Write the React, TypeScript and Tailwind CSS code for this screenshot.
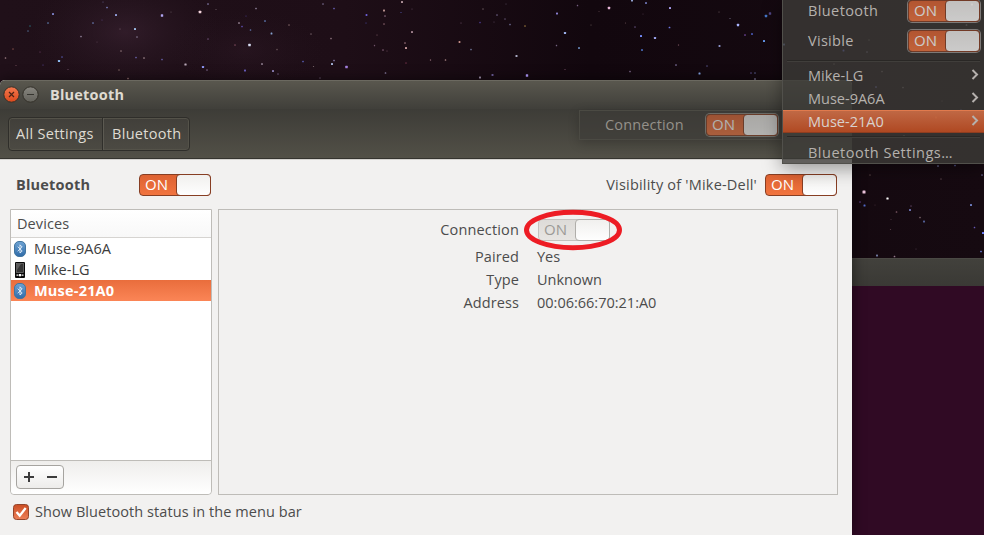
import React from "react";

const STARS: [number, number, number, string][] = [
  [103, 2, 1, "#6f6aa0"], [107, 7.5, 1.5, "#7f86c4"], [116, 15, 2, "#93a0dd"], [53, 14, 2, "#7a7fc4"], [48, 23, 1.5, "#5f7fae"],
  [30, 26, 1.5, "#285a66"], [28, 31, 1.5, "#4a5f80"], [93, 23, 1.5, "#6d80b8"], [102, 20, 1, "#5b4a8a"], [162, 15.5, 2.4, "#b0a4f0"],
  [171, 12, 1, "#6f606a"], [200, 12, 2.6, "#f4d4dc"], [208, 4, 1.5, "#8a82b0"], [135, 29, 2, "#9fbfe8"], [137, 37, 1.5, "#82758e"],
  [120, 29, 1.2, "#735b68"], [81, 36.5, 1.5, "#94849b"], [97, 42, 1, "#604858"], [121, 51, 1.5, "#876d71"], [40, 52, 1.2, "#6a3c64"],
  [13, 49, 1.4, "#7c4a46"], [5.5, 58, 1.5, "#92767c"], [59, 61, 2.2, "#8fbcf2"], [62, 57, 1.5, "#5154a2"], [43, 65, 1.2, "#554390"],
  [16, 65.5, 1.2, "#6b4654"], [68, 69.5, 1.2, "#694c60"], [136, 57.5, 1.5, "#6b64ae"], [144, 58, 1.6, "#988086"], [162, 59.5, 1.5, "#6962b0"],
  [119, 70, 1.5, "#735a58"], [128, 78.5, 1.5, "#9a7575"], [185.5, 64.5, 2.2, "#b9a8b8"], [203, 67, 2.2, "#8c94f0"], [207, 70, 1.5, "#756284"],
  [208, 39, 1.3, "#775781"], [216, 9.5, 1.2, "#67545c"], [256, 8.5, 1.6, "#8c7d95"], [246, 16, 1, "#5145a0"], [239, 23, 1.6, "#ab99a8"],
  [242, 26.5, 1.7, "#5848a0"], [250.5, 30, 1.5, "#5b6ca2"], [265, 21, 1.6, "#6484c2"], [271.5, 33.5, 1.8, "#86a2cf"], [249.5, 45, 2.5, "#d9dff5"],
  [235, 45, 1.3, "#875263"], [277, 49.5, 1.3, "#705d61"], [289, 25, 1.6, "#72595b"], [311, 34, 1.3, "#756269"], [331, 38.5, 1.5, "#8f7680"],
  [323, 4, 1.5, "#776b8e"], [334, 8.5, 1.6, "#655caf"], [366.5, 15, 1.8, "#685cd0"], [384, 10.5, 2, "#b78f8c"], [385, 16, 1.5, "#87657c"],
  [384, 24, 1.4, "#8b656f"], [366, 23, 1.2, "#47449b"], [377, 35, 1.2, "#785560"], [374.5, 45.5, 1.3, "#70546a"], [383, 50, 1.4, "#85637b"],
  [387, 51, 1.2, "#634353"], [303, 61.5, 1.5, "#5d62bd"], [334, 60.5, 1.6, "#8276a3"], [332, 64, 2, "#a7b6dc"], [346.5, 67, 2.5, "#a581e0"],
  [313.5, 66.5, 1.2, "#78676c"], [385.5, 73, 1.6, "#807699"], [262, 64, 1.7, "#aa99ab"], [245, 70.5, 1.8, "#7267d0"], [273, 71, 2, "#8e82b8"],
  [278, 74, 1.3, "#776188"], [320, 78, 1.3, "#645169"],
  [402, 2, 1.8, "#c5a6ad"], [412, 9, 1, "#645064"], [401, 12.5, 1.2, "#4b4c9b"], [412, 32, 2, "#a0818d"], [405, 43, 1.5, "#9a737d"],
  [406, 48, 2, "#c89b9c"], [406, 63, 1.3, "#72324a"], [430.5, 60, 1.3, "#805f6a"], [445.5, 60, 1.5, "#9d7c7c"], [459.5, 42, 1.8, "#c48d85"],
  [471, 49.5, 1.5, "#70789c"], [461, 23, 1.2, "#644a5f"], [480, 22.5, 1.3, "#5643a9"], [483, 9, 1.3, "#6a595e"], [497, 15, 1.4, "#73668d"],
  [506, 4, 1.2, "#4d4053"], [505, 19, 1.3, "#665676"], [510, 24.5, 1.6, "#68668b"], [525, 26, 1.5, "#92733c"], [494, 22, 1, "#605063"],
  [557, 13.5, 1.8, "#978ce6"], [565, 33, 2.2, "#9eb4ef"], [516.5, 56, 2, "#abacc4"], [492.5, 75, 2, "#6b5d9a"], [480, 77.5, 2, "#9f91ab"],
  [527, 75.5, 2.4, "#b29bff"], [556.5, 45.5, 1.4, "#756482"], [579, 48, 1.8, "#6685b5"], [565, 69.5, 1.2, "#6f4b60"], [591, 25, 1.2, "#5c504f"],
  [609, 8, 2.4, "#e8b6d8"], [577.5, 5.5, 1.4, "#775f81"], [599, 11.5, 1, "#5b424c"], [632, .5, 2, "#92a2d0"], [646, 3, 1.8, "#6f76b8"],
  [670, 8, 2, "#aa9ff1"], [669.5, 27.5, 1.7, "#6c74df"], [641, 36, 2, "#758dff"], [655, 38, 2.2, "#9ca4ef"], [642, 50, 1.8, "#4768b4"],
  [635, 27, 1.4, "#63507b"], [625.5, 23, 1.2, "#5d464b"], [643, 14, 1, "#4f3c4e"], [678.5, 45, 1.3, "#63434d"], [719.5, 46, 1.9, "#8b92c7"],
  [738, 25, 2.3, "#aab5ff"], [745, 35, 1.6, "#7349a1"], [752, 34, 1.8, "#4755ae"], [764, 41, 2, "#669bf0"], [766, 16, 2.4, "#4475c7"],
  [770, 13.5, 2.4, "#504586"], [730, 18.5, 1.2, "#666078"], [719, 12, 1.2, "#655459"], [676, 65, 1.6, "#7b709a"], [707, 66, 1.5, "#4c4875"],
  [699.5, 73.5, 2, "#82a4e4"], [630, 71.5, 1.5, "#7f6c8e"], [751, 73, 1.5, "#51477e"], [755, 79, 1.6, "#9087ae"], [755, 73, 1.5, "#545784"],
  [784, 44.5, 2, "#7a8ccb"], [843.5, 50.5, 1.8, "#7b7eff"], [867, 52, 1.5, "#8d7fa9"], [869, 40, 1.3, "#726a6a"], [834, 64, 1.3, "#7a696d"],
  [966.5, 25, 1.7, "#a99ba4"], [972, 4.5, 2, "#ffd9ee"], [876, 87, 1.7, "#857eda"], [903, 87.5, 1.4, "#a09095"], [882, 71.5, 1.4, "#9b858d"],
  [942, 101, 1.2, "#765f60"], [961, 110, 1.3, "#6d7cc2"], [936, 117.5, 2, "#ffe4ac"], [960, 131, 1.8, "#ff92c7"], [904, 136, 1.5, "#9a9170"],
  [864, 192, 3, "#eec5dd"], [887.5, 198.5, 2.2, "#ffffff"], [864.5, 205.5, 2, "#5068c5"], [860, 202, 1.7, "#533577"], [896.5, 212, 1.6, "#75535f"],
  [910, 210, 2, "#6c72af"], [911, 206, 1.3, "#5c425f"], [924, 221.5, 1.8, "#5868a3"], [920, 217.5, 1.4, "#846e73"], [891, 219.5, 1, "#543e48"],
  [971, 205, 1.8, "#798dd8"], [974.5, 227.5, 1.5, "#6558b2"], [983, 233, 2, "#6e7fff"], [981, 251.5, 1.7, "#6575ca"], [877, 255.5, 1.8, "#7a86af"],
  [894.5, 256.5, 1.6, "#95798b"], [938, 166, 1.4, "#7c83b5"], [955, 165.5, 1.4, "#5e64a7"], [982, 175, 1.4, "#7772a4"], [870, 175, 1.3, "#5b4648"],
  [941, 179, 1.3, "#584349"], [916, 249, 1.2, "#463441"], [890.5, 229.5, 1.2, "#573e47"], [875, 205, 1, "#4b3540"],
];

function Wallpaper() {
  return (
    <svg className="absolute inset-0" width="984" height="260" viewBox="0 0 984 260">
      <defs>
        <radialGradient id="haze">
          <stop offset="0" stopColor="#3c2434" stopOpacity=".6" />
          <stop offset="1" stopColor="#281822" stopOpacity="0" />
        </radialGradient>
        <linearGradient id="night">
          <stop offset="0" stopColor="#201019" />
          <stop offset=".35" stopColor="#1e0e17" />
          <stop offset=".6" stopColor="#12070e" />
          <stop offset="1" stopColor="#160a11" />
        </linearGradient>
      </defs>
      <rect width="984" height="260" fill="url(#night)" />
      <ellipse cx="125" cy="32" rx="95" ry="58" fill="url(#haze)" />
      <ellipse cx="245" cy="50" rx="80" ry="40" fill="url(#haze)" opacity=".4" />
      {STARS.map(([x, y, size, color], i) => (
        <rect key={i} x={x - size / 2} y={y - size / 2} width={size} height={size} rx=".5" fill={color} />
      ))}
    </svg>
  );
}

function Switch({ disabled = false, className = "" }: { disabled?: boolean; className?: string }) {
  return (
    <div
      className={`relative flex h-[22px] w-[72px] shrink-0 rounded-[4px] border ${
        disabled
          ? "border-[#c4c2be] bg-linear-to-b from-[#dddbd8] to-[#e7e5e2] text-[#9c9a96]"
          : "border-[#873e23] bg-linear-to-b from-[#dd6232] to-[#f1743f] text-white"
      } ${className}`}
    >
      <span className="w-[36px] pl-[5px] text-[15px] leading-[18px] tracking-[0.2px]">ON</span>
      <span
        className={`absolute -top-px -right-px h-[22px] w-[35px] rounded-[4px] border bg-linear-to-b from-[#f1f0ee] to-[#fefefe] ${
          disabled ? "border-[#b0aeaa]" : "border-[#873e23]"
        }`}
      />
    </div>
  );
}

function BluetoothIcon() {
  return (
    <svg width="12" height="16" viewBox="0 0 12 16">
      <defs>
        <linearGradient id="bt" x2="0" y2="1">
          <stop offset="0" stopColor="#6ea3d4" />
          <stop offset="1" stopColor="#2f6ba8" />
        </linearGradient>
      </defs>
      <rect x=".5" y=".5" width="11" height="15" rx="4.5" fill="url(#bt)" stroke="#42759f" />
      <path d="M3.7 5.7 8.2 10 6 12V3.8L8.2 6 3.7 10.2" fill="none" stroke="#e7f1fa" strokeWidth=".9" />
    </svg>
  );
}

function PhoneIcon() {
  return (
    <svg width="12" height="16" viewBox="0 0 12 16">
      <rect x="1" y="0" width="10" height="16" rx="1" fill="#080808" />
      <rect x="2.5" y="1.5" width="7" height="9" fill="#353535" stroke="#777" strokeWidth=".7" />
      <path d="M3 2h4L3 8z" fill="#5c5c5c" />
      <rect x="2.5" y="12.3" width="2" height="1.7" fill="#bbb" />
      <rect x="5" y="12" width="2" height="2.3" fill="#fff" />
      <rect x="7.5" y="12.3" width="2" height="1.7" fill="#bbb" />
    </svg>
  );
}

function DeviceRow({ name, phone, selected }: { name: string; phone?: boolean; selected?: boolean }) {
  return (
    <div
      className={`flex h-[21px] items-center pl-[3px] text-[14.5px] ${
        selected ? "bg-linear-to-b from-[#e96d3c] to-[#fb8556] font-bold text-white" : "text-[#3c3c3c]"
      }`}
    >
      {phone ? <PhoneIcon /> : <BluetoothIcon />}
      <span className={`ml-2 ${selected ? "tracking-[0.2px]" : "tracking-[0.05px]"}`}>{name}</span>
    </div>
  );
}

function Detail({ label, value }: { label: string; value: string }) {
  return (
    <div className="flex h-[23px] items-center">
      <span className="w-[300px] text-right tracking-[0.1px]">{label}</span>
      <span className="ml-[18px]">{value}</span>
    </div>
  );
}

function MenuDevice({ name, active }: { name: string; active?: boolean }) {
  return (
    <div
      className={`flex h-[23px] shrink-0 items-center justify-between pr-[5px] pl-[25px] ${
        active ? "border-y border-t-[#e17a4d] border-b-[#8e3d20] bg-linear-to-b from-[#cf6e46]/90 to-[#bd4b20]/90 text-[#d9d1cd]" : ""
      }`}
    >
      <span>{name}</span>
      <svg width="8" height="11" viewBox="0 0 8 11" className="relative -top-px">
        <path d="m1.5 1 4.5 4.5L1.5 10" fill="none" stroke="#b5b0ad" strokeWidth="2" />
      </svg>
    </div>
  );
}

function SettingsWindow() {
  return (
    <div className="absolute top-[80px] left-0 flex h-[455px] w-[852px] flex-col overflow-hidden rounded-t-[5px] bg-[#f2f1f0] shadow-[0_0_14px_rgba(0,0,0,0.5)]">
      <header className="flex h-[29px] shrink-0 items-center border-t border-[#6b6960] bg-linear-to-b from-[#59574e] to-[#403f3a] pl-[3px]">
        <svg width="37" height="18" viewBox="0 0 37 18">
          <defs>
            <linearGradient id="close" x2="0" y2="1">
              <stop offset="0" stopColor="#f4794f" />
              <stop offset="1" stopColor="#dc491c" />
            </linearGradient>
            <linearGradient id="minimize" x2="0" y2="1">
              <stop offset="0" stopColor="#888680" />
              <stop offset="1" stopColor="#62615a" />
            </linearGradient>
          </defs>
          <circle cx="8.5" cy="8.5" r="7.7" fill="url(#close)" stroke="#333029" />
          <path d="m6 6 5 5m0-5-5 5" stroke="#4c2315" strokeWidth="1.2" />
          <circle cx="27.5" cy="8.5" r="7.7" fill="url(#minimize)" stroke="#333029" />
          <path d="M24 8.5h7" stroke="#35342f" strokeWidth="1.2" />
        </svg>
        <span className="ml-[10px] text-[14.5px] font-bold tracking-[0.2px] text-[#dfdbd2]">Bluetooth</span>
      </header>
      <nav className="flex h-[50px] shrink-0 items-center border-b border-[#35342f] bg-linear-to-b from-[#3d3c37] to-[#525047] pl-[8px]">
        <div className="flex h-[34px] w-[182px] rounded-[4px] border border-[#2f2e2a] bg-linear-to-b from-[#413f3a] to-[#4c4a43] text-[14.5px] leading-[32px] text-[#dfdbd2] shadow-[inset_0_0_0_1px_#545249]">
          <span className="w-[94px] border-r border-[#302f2b] pl-[7px] tracking-[0.3px]">All Settings</span>
          <span className="border-l border-[#5c5a52] pl-[8px] tracking-[0.3px]">Bluetooth</span>
        </div>
      </nav>
      <main className="flex grow flex-col border-t border-[#d5d3d0] pr-[14px] pl-[10px] text-[14.5px] text-[#4c4c4c]">
        <div className="flex h-[49px] shrink-0 items-center">
          <span className="w-[129px] pl-[6px] font-bold tracking-[0.2px]">Bluetooth</span>
          <Switch />
          <span className="mr-[8px] ml-auto tracking-[0.2px]">Visibility of 'Mike-Dell'</span>
          <Switch className="mr-px" />
        </div>
        <div className="flex h-[286px] shrink-0 gap-[6px]">
          <aside className="flex w-[202px] flex-col rounded-b-[4px] border border-[#bebcb8] bg-white">
            <div className="h-[28px] shrink-0 border-b border-[#d6d4d1] bg-linear-to-b from-white to-[#f8f8f8] pl-[6px] leading-[28px] tracking-[0.1px]">
              Devices
            </div>
            <DeviceRow name="Muse-9A6A" />
            <DeviceRow name="Mike-LG" phone />
            <DeviceRow name="Muse-21A0" selected />
            <div className="mt-auto flex h-[34px] rounded-b-[4px] border-t border-[#bebcb8] bg-linear-to-b from-[#efeeec] to-white pt-[4px] pl-[5px]">
              <div className="flex h-[24px] w-[48px] items-center justify-around rounded-[4px] border border-[#a6a4a0] bg-linear-to-b from-white to-[#edecea]">
                <svg width="10" height="10" viewBox="0 0 10 10">
                  <path d="M0 5h10M5 0v10" stroke="#3c3c3c" strokeWidth="2" />
                </svg>
                <svg width="10" height="10" viewBox="0 0 10 10">
                  <path d="M0 5h10" stroke="#3c3c3c" strokeWidth="2" />
                </svg>
              </div>
            </div>
          </aside>
          <section className="grow border border-[#bebcb8] pt-[9px]">
            <div className="flex h-[26px]">
              <span className="w-[300px] text-right leading-[22px] tracking-[0.15px]">Connection</span>
              <div className="relative ml-[19px] h-[22px]">
                <Switch disabled />
                <svg className="absolute -top-[10px] -left-[15px]" width="100" height="42" viewBox="0 0 100 42">
                  <ellipse cx="50" cy="21" rx="46.5" ry="17.7" fill="none" stroke="#ed1c24" strokeWidth="5" />
                </svg>
              </div>
            </div>
            <Detail label="Paired" value="Yes" />
            <Detail label="Type" value="Unknown" />
            <Detail label="Address" value="00:06:66:70:21:A0" />
          </section>
        </div>
        <label className="flex h-[34px] items-center pl-[3px]">
          <svg width="16" height="16" viewBox="0 0 16 16">
            <defs>
              <linearGradient id="check" x2="0" y2="1">
                <stop offset="0" stopColor="#cb4e24" />
                <stop offset="1" stopColor="#ed8059" />
              </linearGradient>
            </defs>
            <rect x=".5" y=".5" width="15" height="15" rx="3" fill="url(#check)" stroke="#94452c" />
            <path d="m3.5 8 3.2 3.6 6-7.6" fill="none" stroke="white" strokeWidth="2.3" />
          </svg>
          <span className="ml-[6px] tracking-[0.07px]">Show Bluetooth status in the menu bar</span>
        </label>
      </main>
    </div>
  );
}

export default function App() {
  return (
    <div className="relative h-[535px] w-[984px] overflow-hidden bg-[#12070e] font-['Open_Sans','Noto_Sans',sans-serif]">
      <Wallpaper />
      <div className="absolute top-[258px] left-[840px] h-[277px] w-[144px] bg-[#300a24]">
        <div className="h-[28px] border-t border-[#4a4944] bg-linear-to-b from-[#42413c] to-[#3a3935]" />
      </div>
      <SettingsWindow />
      <div className="absolute top-[110px] left-[579px] flex h-[30px] w-[204px] items-center justify-between border border-[#4b4a43] bg-[#3c3b37]/60 pr-[4px] pl-[25px] text-[14.5px] text-[#94918a] shadow-[0_3px_12px_rgba(0,0,0,0.2)]">
        <span className="tracking-[0.15px]">Connection</span>
        <Switch className="opacity-60 shadow-[0_0_0_1px_#8c8b84]" />
      </div>
      <div className="absolute top-0 left-[782px] flex h-[164px] w-[202px] flex-col border-b border-l border-[#51504b] bg-[#3c3b37]/80 text-[14.5px] text-[#b5b1ad] shadow-[0_4px_18px_rgba(0,0,0,0.4)]">
        <div className="flex h-[22px] shrink-0 items-center justify-between pr-[4px] pl-[25px]">
          <span className="tracking-[0.4px]">Bluetooth</span>
          <Switch className="opacity-75 shadow-[0_0_0_1px_#96928f]" />
        </div>
        <div className="mt-[8px] flex h-[22px] shrink-0 items-center justify-between pr-[4px] pl-[25px]">
          <span className="tracking-[0.3px]">Visible</span>
          <Switch className="opacity-75 shadow-[0_0_0_1px_#96928f]" />
        </div>
        <div className="mx-1 mt-[8px] mb-[2px] h-[2px] shrink-0 border-t border-b border-t-[#292725] border-b-[#403e3b]" />
        <MenuDevice name="Mike-LG" />
        <MenuDevice name="Muse-9A6A" />
        <MenuDevice name="Muse-21A0" active />
        <div className="mx-1 mt-[3px] h-[2px] shrink-0 border-t border-b border-t-[#292725] border-b-[#403e3b]" />
        <div className="h-[25px] shrink-0 pl-[25px] leading-[29px] tracking-[0.5px]">Bluetooth Settings…</div>
      </div>
    </div>
  );
}
